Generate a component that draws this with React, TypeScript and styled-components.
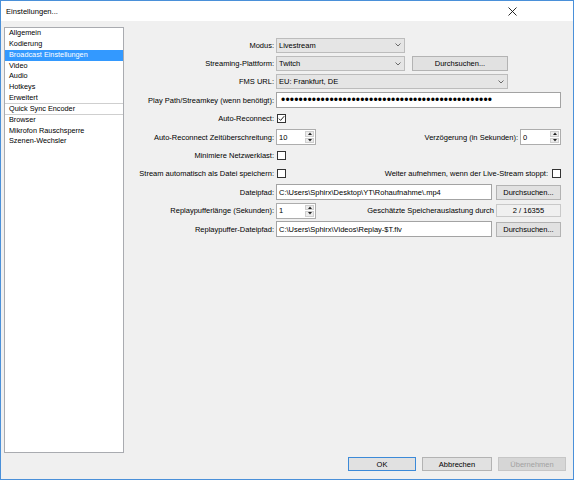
import React from 'react';
import styled, { createGlobalStyle } from 'styled-components';

const Global = createGlobalStyle`
  html, body { margin: 0; padding: 0; background: #f0f0f0; }
  body { font-family: "Liberation Sans", Arial, sans-serif; }
  * { box-sizing: border-box; }
`;

const Window = styled.div`
  width: 574px;
  height: 480px;
  border: 1px solid #4a90d9;
  background: #f0f0f0;
  display: flex;
  flex-direction: column;
  font-family: "Liberation Sans", Arial, sans-serif;
  font-size: 7.5px;
  color: #000;
  overflow: hidden;
`;

const TitleBar = styled.div`
  height: 20px;
  flex: none;
  background: #fff;
  display: flex;
  align-items: center;
  justify-content: space-between;
  padding-left: 5px;
`;

const Title = styled.span`
  font-size: 7.6px;
  color: #000;
`;

const CloseBtn = styled.div`
  width: 10px;
  height: 10px;
  margin-right: 56px;
  display: flex;
  align-items: center;
  justify-content: center;
`;

const Body = styled.div`
  flex: none;
  height: 432px;
  display: grid;
  grid-template-columns: 120px 1fr;
  padding: 6px 0 0 3px;
`;

const List = styled.div`
  height: 426px;
  background: #fff;
  border: 1px solid #a9abb0;
  padding: 0;
  display: flex;
  flex-direction: column;
`;

const Item = styled.div<{ $selected?: boolean; $sep?: boolean }>`
  height: 10.85px;
  line-height: 10.85px;
  padding-left: 4px;
  font-size: 7.3px;
  white-space: nowrap;
  background: ${(p) => (p.$selected ? '#3399ff' : 'transparent')};
  color: ${(p) => (p.$selected ? '#fff' : '#000')};
  border-bottom: ${(p) => (p.$sep ? '1px solid #cfcfcf' : 'none')};
`;

const Form = styled.div`
  padding: 9px 12px 0 0;
  display: flex;
  flex-direction: column;
`;

const Row = styled.div`
  height: 18.4px;
  display: flex;
  align-items: center;
`;

const Label = styled.div`
  width: 150px;
  margin-right: 2px;
  flex: none;
  text-align: right;
  white-space: nowrap;
`;

const SideLabel = styled.div<{ $gap?: number }>`
  white-space: nowrap;
  margin-right: ${(p) => p.$gap ?? 2}px;
`;

const Spacer = styled.div`
  flex: 1;
`;

const Combo = styled.div<{ $w: number }>`
  width: ${(p) => p.$w}px;
  height: 15px;
  flex: none;
  background: #e5e5e5;
  border: 1px solid #bcbcbc;
  padding: 0 3px 0 2px;
  display: flex;
  align-items: center;
  justify-content: space-between;
`;

const Button = styled.div<{ $w: number; $h?: number; $variant?: 'default' | 'disabled' }>`
  width: ${(p) => p.$w}px;
  height: ${(p) => p.$h ?? 15}px;
  flex: none;
  background: ${(p) => (p.$variant === 'disabled' ? '#d6d6d6' : '#e1e1e1')};
  border: 1px solid
    ${(p) => (p.$variant === 'default' ? '#3c8ad8' : p.$variant === 'disabled' ? '#c6c6c6' : '#b3b3b3')};
  color: ${(p) => (p.$variant === 'disabled' ? '#a2a2a2' : '#000')};
  display: flex;
  align-items: center;
  justify-content: center;
  white-space: nowrap;
`;

const ComboGap = styled.div`
  width: 7px;
  flex: none;
`;

const Field = styled.div`
  flex: 1;
  height: 16px;
  background: #fff;
  border: 1px solid #a3a3a3;
  padding-left: 2px;
  display: flex;
  align-items: center;
  white-space: nowrap;
  overflow: hidden;
`;

const Dots = styled.span`
  font-size: 12px;
  letter-spacing: 0.2px;
  line-height: 1;
  padding-left: 2px;
  font-family: "Liberation Sans", Arial, sans-serif;
`;

const PathGap = styled.div`
  width: 4px;
  flex: none;
`;

const SpinBox = styled.div<{ $w: number }>`
  width: ${(p) => p.$w}px;
  height: 16px;
  flex: none;
  background: #fff;
  border: 1px solid #adadad;
  display: flex;
  align-items: stretch;
`;

const SpinValue = styled.div`
  flex: 1;
  padding-left: 2px;
  display: flex;
  align-items: center;
`;

const SpinButtons = styled.div`
  width: 10px;
  display: flex;
  flex-direction: column;
  padding: 1px 1px 1px 0;
  gap: 1px;
`;

const SpinArrow = styled.div`
  flex: 1;
  background: #ececec;
  border: 1px solid #cfcfcf;
  display: flex;
  align-items: center;
  justify-content: center;
`;

const Check = styled.div`
  width: 9px;
  height: 9px;
  flex: none;
  margin-left: 1px;
  background: #fff;
  border: 1px solid #333;
  display: flex;
  align-items: center;
  justify-content: center;
`;

const InfoBox = styled.div`
  width: 65px;
  height: 13px;
  flex: none;
  border: 1px solid #c9c9c9;
  display: flex;
  align-items: center;
  justify-content: center;
`;

const Footer = styled.div`
  flex: none;
  display: flex;
  justify-content: flex-end;
  gap: 6px;
  padding: 4px 7px 0 0;
`;

const Chevron = () => (
  <svg width="6" height="4" viewBox="0 0 6 4">
    <polyline points="0.5,0.5 3,3 5.5,0.5" fill="none" stroke="#5a5a5a" strokeWidth="0.9" />
  </svg>
);

const Tri = ({ up }: { up?: boolean }) => (
  <svg width="4" height="3" viewBox="0 0 4 3">
    <polygon points={up ? '0,3 4,3 2,0.5' : '0,0 4,0 2,2.5'} fill="#222" />
  </svg>
);

const Spin = ({ w, value }: { w: number; value: string }) => (
  <SpinBox $w={w}>
    <SpinValue>{value}</SpinValue>
    <SpinButtons>
      <SpinArrow>
        <Tri up />
      </SpinArrow>
      <SpinArrow>
        <Tri />
      </SpinArrow>
    </SpinButtons>
  </SpinBox>
);

const CheckBox = ({ checked }: { checked?: boolean }) => (
  <Check>
    {checked && (
      <svg width="7" height="7" viewBox="0 0 7 7">
        <polyline points="0.8,3.6 2.6,5.4 6.2,1.2" fill="none" stroke="#222" strokeWidth="1" />
      </svg>
    )}
  </Check>
);

const navItems: { label: string; selected?: boolean; sep?: boolean }[] = [
  { label: 'Allgemein' },
  { label: 'Kodierung' },
  { label: 'Broadcast Einstellungen', selected: true },
  { label: 'Video' },
  { label: 'Audio' },
  { label: 'Hotkeys' },
  { label: 'Erweitert', sep: true },
  { label: 'Quick Sync Encoder', sep: true },
  { label: 'Browser' },
  { label: 'Mikrofon Rauschsperre' },
  { label: 'Szenen-Wechsler' },
];

export default function App() {
  return (
    <>
      <Global />
      <Window>
        <TitleBar>
          <Title>Einstellungen...</Title>
          <CloseBtn>
            <svg width="9" height="9" viewBox="0 0 9 9">
              <line x1="0.5" y1="0.5" x2="8.5" y2="8.5" stroke="#111" strokeWidth="0.9" />
              <line x1="8.5" y1="0.5" x2="0.5" y2="8.5" stroke="#111" strokeWidth="0.9" />
            </svg>
          </CloseBtn>
        </TitleBar>
        <Body>
          <List>
            {navItems.map((it) => (
              <Item key={it.label} $selected={it.selected} $sep={it.sep}>
                {it.label}
              </Item>
            ))}
          </List>
          <Form>
            <Row>
              <Label>Modus:</Label>
              <Combo $w={129}>
                <span>Livestream</span>
                <Chevron />
              </Combo>
            </Row>
            <Row>
              <Label>Streaming-Plattform:</Label>
              <Combo $w={129}>
                <span>Twitch</span>
                <Chevron />
              </Combo>
              <ComboGap />
              <Button $w={96}>Durchsuchen...</Button>
            </Row>
            <Row>
              <Label>FMS URL:</Label>
              <Combo $w={232}>
                <span>EU: Frankfurt, DE</span>
                <Chevron />
              </Combo>
            </Row>
            <Row>
              <Label>Play Path/Streamkey (wenn benötigt):</Label>
              <Field>
                <Dots>{'•'.repeat(48)}</Dots>
              </Field>
            </Row>
            <Row>
              <Label>Auto-Reconnect:</Label>
              <CheckBox checked />
            </Row>
            <Row>
              <Label>Auto-Reconnect Zeitüberschreitung:</Label>
              <Spin w={40} value="10" />
              <Spacer />
              <SideLabel>Verzögerung (in Sekunden):</SideLabel>
              <Spin w={41} value="0" />
            </Row>
            <Row>
              <Label>Minimiere Netzwerklast:</Label>
              <CheckBox />
            </Row>
            <Row>
              <Label>Stream automatisch als Datei speichern:</Label>
              <CheckBox />
              <Spacer />
              <SideLabel $gap={3}>Weiter aufnehmen, wenn der Live-Stream stoppt:</SideLabel>
              <CheckBox />
            </Row>
            <Row>
              <Label>Dateipfad:</Label>
              <Field>C:\Users\Sphirx\Desktop\YT\Rohaufnahme\.mp4</Field>
              <PathGap />
              <Button $w={65}>Durchsuchen...</Button>
            </Row>
            <Row>
              <Label>Replaypufferlänge (Sekunden):</Label>
              <Spin w={40} value="1" />
              <Spacer />
              <SideLabel>Geschätzte Speicherauslastung durch</SideLabel>
              <InfoBox>2 / 16355</InfoBox>
            </Row>
            <Row>
              <Label>Replaypuffer-Dateipfad:</Label>
              <Field>C:\Users\Sphirx\Videos\Replay-$T.flv</Field>
              <PathGap />
              <Button $w={65}>Durchsuchen...</Button>
            </Row>
          </Form>
        </Body>
        <Footer>
          <Button $w={68} $h={14} $variant="default">
            OK
          </Button>
          <Button $w={70} $h={14}>
            Abbrechen
          </Button>
          <Button $w={68} $h={14} $variant="disabled">
            Übernehmen
          </Button>
        </Footer>
      </Window>
    </>
  );
}
